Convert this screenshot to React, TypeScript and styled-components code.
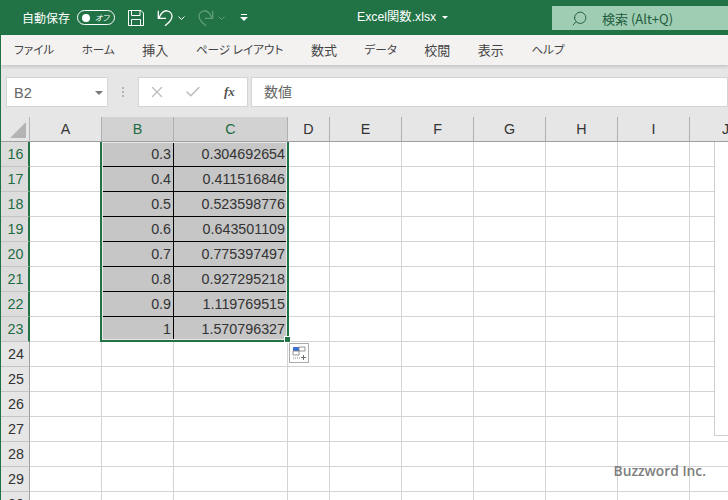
import * as React from 'react';
import styled, { createGlobalStyle } from 'styled-components';
import { Check, Search, X } from 'lucide-react';

const columns = [
  { name: 'A', width: 72 },
  { name: 'B', width: 72 },
  { name: 'C', width: 114 },
  { name: 'D', width: 42 },
  { name: 'E', width: 72 },
  { name: 'F', width: 72 },
  { name: 'G', width: 72 },
  { name: 'H', width: 72 },
  { name: 'I', width: 72 },
  { name: 'J', width: 72 }
];

const values: Record<number, [string, string]> = {
  16: ['0.3', '0.304692654'],
  17: ['0.4', '0.411516846'],
  18: ['0.5', '0.523598776'],
  19: ['0.6', '0.643501109'],
  20: ['0.7', '0.775397497'],
  21: ['0.8', '0.927295218'],
  22: ['0.9', '1.119769515'],
  23: ['1', '1.570796327']
};

const rows = Array.from({ length: 15 }, (_, i) => i + 16);
const tabs = [
  { label: 'ファイル', kana: true },
  { label: 'ホーム', kana: true },
  { label: '挿入', kana: false },
  { label: 'ページ レイアウト', kana: true },
  { label: '数式', kana: false },
  { label: 'データ', kana: true },
  { label: '校閲', kana: false },
  { label: '表示', kana: false },
  { label: 'ヘルプ', kana: true }
];

const fontStack = `'Noto Sans CJK JP', 'Liberation Sans', sans-serif`;
const numberStack = `'Liberation Sans', 'Noto Sans CJK JP', sans-serif`;

const GlobalStyle = createGlobalStyle`
  html, body {
    margin: 0;
    padding: 0;
    background: #fff;
  }
`;

const Window = styled.div`
  width: 728px;
  height: 500px;
  overflow: hidden;
  position: relative;
  box-sizing: border-box;
  border-left: 1px solid #217346;
  font-family: ${fontStack};
  font-feature-settings: 'palt';
  display: flex;
  flex-direction: column;
  background: #fff;
`;

const TitleBar = styled.div`
  height: 35px;
  flex-shrink: 0;
  background: #217346;
  color: #fff;
  display: flex;
  align-items: center;
  position: relative;
`;

const AutoSave = styled.span`
  margin-left: 21px;
  font-size: 12px;
  white-space: nowrap;
`;

const Toggle = styled.div`
  margin-left: 7px;
  width: 38px;
  height: 15px;
  flex-shrink: 0;
  box-sizing: border-box;
  border: 1px solid #fff;
  border-radius: 8px;
  display: flex;
  align-items: center;
  justify-content: space-between;
  padding: 0 5px 0 4px;
`;

const ToggleDot = styled.i`
  width: 8px;
  height: 8px;
  border-radius: 50%;
  background: #fff;
`;

const ToggleLabel = styled.span`
  font-size: 8px;
  font-style: italic;
  line-height: 1;
`;

const QuickIcon = styled.svg<{ $left: number }>`
  margin-left: ${({ $left }) => $left}px;
  flex-shrink: 0;
  display: block;
`;

const FileName = styled.div`
  position: absolute;
  left: 356px;
  top: 9px;
  font-size: 12.3px;
  line-height: 17px;
  white-space: nowrap;
  display: flex;
  align-items: center;
  font-family: ${numberStack};
`;

const Caret = styled.i<{ $color: string; $gap: number; $size: number }>`
  margin-left: ${({ $gap }) => $gap}px;
  width: 0;
  height: 0;
  border-left: ${({ $size }) => $size}px solid transparent;
  border-right: ${({ $size }) => $size}px solid transparent;
  border-top: ${({ $size }) => $size}px solid ${({ $color }) => $color};
`;

const SearchBox = styled.div`
  position: absolute;
  left: 551px;
  top: 6px;
  right: 0;
  height: 24px;
  background: #9fcdb3;
  color: #1e5c3c;
  display: flex;
  align-items: center;
  padding-left: 19px;
  font-size: 13px;
`;

const SearchLabel = styled.span`
  margin-left: 14px;
`;

const Ribbon = styled.div`
  height: 30px;
  flex-shrink: 0;
  box-sizing: border-box;
  background: #f3f2f1;
  display: flex;
  align-items: center;
  padding: 0 0 2px 13px;
  gap: 27.5px;
  color: #444;
  box-shadow: 0 2px 3px rgba(0, 0, 0, 0.14);
  position: relative;
  z-index: 1;
`;

const Tab = styled.span<{ $kana: boolean }>`
  white-space: nowrap;
  font-size: ${({ $kana }) => ($kana ? '11.6px' : '13px')};
`;

const FormulaBar = styled.div`
  height: 52px;
  flex-shrink: 0;
  background: #e6e6e6;
  box-sizing: border-box;
  padding: 12px 0 10px 5px;
  display: flex;
  align-items: stretch;
`;

const FieldBox = styled.div`
  background: #fff;
  box-sizing: border-box;
  border: 1px solid #d4d4d4;
  display: flex;
  align-items: center;
`;

const NameBox = styled(FieldBox)`
  width: 102px;
  justify-content: space-between;
  padding: 2px 4px 0 7px;
  color: #666;
  font-family: ${numberStack};
  font-size: 14.5px;
`;

const Grip = styled.div`
  width: 30px;
  display: flex;
  flex-direction: column;
  align-items: center;
  justify-content: center;
  gap: 2px;
`;

const GripDot = styled.i`
  width: 2px;
  height: 2px;
  background: #b4b4b4;
`;

const ActionBox = styled(FieldBox)`
  width: 110px;
  padding-left: 9px;
  color: #bcbcbc;
  gap: 18px;
`;

const FxLabel = styled.span`
  font-family: 'Liberation Serif', serif;
  font-style: italic;
  font-weight: 700;
  color: #555;
  font-size: 13px;
  margin-left: 4px;
`;

const InputBox = styled(FieldBox)`
  flex: 1;
  margin-left: 3px;
  padding: 0 0 3px 12px;
  color: #666;
  font-size: 14px;
`;

const Sheet = styled.div`
  flex: 1;
  display: grid;
  grid-template-columns: 29px ${columns.map((c) => `${c.width}px`).join(' ')};
  grid-auto-rows: 25px;
  position: relative;
  font-family: ${numberStack};
  font-size: 14.3px;
  color: #222;
`;

const Corner = styled.div`
  background: #e6e6e6;
  box-sizing: border-box;
  border-right: 1px solid #b5b5b5;
  border-bottom: 1px solid #9f9f9f;
  display: flex;
  align-items: flex-end;
  justify-content: flex-end;
  padding: 0 3px 3px 0;
`;

const Triangle = styled.i`
  width: 0;
  height: 0;
  border-left: 16px solid transparent;
  border-bottom: 16px solid #b4b4b4;
`;

const ColumnHead = styled.div<{ $active: boolean }>`
  box-sizing: border-box;
  background: ${({ $active }) => ($active ? '#d2d2d2' : '#e6e6e6')};
  color: ${({ $active }) => ($active ? '#1e6b43' : '#333')};
  border-right: 1px solid #b0b0b0;
  border-bottom: 1px solid #9f9f9f;
  display: flex;
  align-items: center;
  justify-content: center;
`;

const RowHead = styled.div<{ $active: boolean }>`
  box-sizing: border-box;
  background: ${({ $active }) => ($active ? '#dcdcdc' : '#e6e6e6')};
  color: ${({ $active }) => ($active ? '#1e6b43' : '#333')};
  border-right: ${({ $active }) => ($active ? '2px solid #217346' : '1px solid #9f9f9f')};
  border-bottom: 1px solid #c4c4c4;
  display: flex;
  align-items: center;
  justify-content: center;
  padding-left: 2px;
`;

const Cell = styled.div<{ $selected: boolean }>`
  box-sizing: border-box;
  background: ${({ $selected }) => ($selected ? '#c6c6c6' : '#fff')};
  border-right: 1px solid ${({ $selected }) => ($selected ? '#000' : '#d4d4d4')};
  border-bottom: 1px solid ${({ $selected }) => ($selected ? '#000' : '#d4d4d4')};
  display: flex;
  align-items: center;
  justify-content: flex-end;
  padding-right: 2px;
  color: #333;
`;

const Selection = styled.div`
  position: absolute;
  grid-column: 3 / 5;
  grid-row: 2 / 10;
  top: 0;
  left: -2px;
  right: -1px;
  bottom: 0;
  box-sizing: border-box;
  border: 2px solid #217346;
  border-top: none;
  box-shadow: inset 0 0 0 1px #e8e8e8;
  pointer-events: none;
`;

const FillHandle = styled.i`
  position: absolute;
  right: -4px;
  bottom: -3px;
  width: 5px;
  height: 5px;
  background: #217346;
  border: 1px solid #fff;
`;

const QuickAnalysis = styled.div`
  position: absolute;
  right: -22px;
  bottom: -23px;
  width: 20px;
  height: 20px;
  box-sizing: border-box;
  background: #fff;
  border: 1px solid #ababab;
  display: flex;
  align-items: center;
  justify-content: center;
`;

const ChartEdge = styled.div`
  position: absolute;
  left: 713px;
  top: 25px;
  width: 20px;
  height: 293px;
  background: #fff;
  border-left: 1px solid #d0d0d0;
  border-bottom: 1px solid #d0d0d0;
`;

const Watermark = styled.div`
  position: absolute;
  right: 22px;
  bottom: 20px;
  font-family: 'Open Sans', sans-serif;
  font-size: 13.8px;
  font-weight: 600;
  color: #7d7d7d;
  white-space: nowrap;
`;

export default function App() {
  return (
    <>
      <GlobalStyle />
      <Window>
        <TitleBar>
          <AutoSave>自動保存</AutoSave>
          <Toggle>
            <ToggleDot />
            <ToggleLabel>オフ</ToggleLabel>
          </Toggle>
          <QuickIcon $left={13} width="16" height="16" viewBox="0 0 16 16" fill="none" stroke="#fff" strokeWidth="1">
            <path d="M.5.5h12.500l2.500 2.500v12.500H.5z" />
            <path d="M3.500 .5v5h8.500v-5M3.500 15.500v-6h9v6" />
          </QuickIcon>
          <QuickIcon $left={13} width="17" height="18" viewBox="0 0 17 18" fill="none" stroke="#fff" strokeWidth="1.300">
            <path d="M1.300 1.700V9.300H9" />
            <path d="M2 9C4 4 7 1.500 10 1.800c4 .4 6 4.200 4.500 7.700-1 2.500-3.500 5-6.500 7.200" />
          </QuickIcon>
          <QuickIcon $left={4} width="7" height="4" viewBox="0 0 7 4" fill="none" stroke="#fff">
            <path d="M.5.500l3 3 3-3" />
          </QuickIcon>
          <QuickIcon $left={12} width="17" height="18" viewBox="0 0 17 18" fill="none" stroke="#5f9c7c" strokeWidth="1.300">
            <path d="M15.700 1.700V9.300H8" />
            <path d="M15 9C13 4 10 1.500 7 1.800c-4 .4-6 4.200-4.500 7.700 1 2.500 3.500 5 6.500 7.200" />
          </QuickIcon>
          <QuickIcon $left={4} width="7" height="4" viewBox="0 0 7 4" fill="none" stroke="#5f9c7c">
            <path d="M.5.500l3 3 3-3" />
          </QuickIcon>
          <QuickIcon $left={15} width="8" height="7" viewBox="0 0 8 7" fill="#fff" stroke="none">
            <path d="M1 0h6v1H1zM0 3h8L4 7z" />
          </QuickIcon>
          <FileName>
            Excel関数.xlsx
            <Caret $color="#fff" $gap={6} $size={3} />
          </FileName>
          <SearchBox>
            <Search size={17} strokeWidth={1.300} style={{ transform: 'scaleX(-1)' }} />
            <SearchLabel>検索 (Alt+Q)</SearchLabel>
          </SearchBox>
        </TitleBar>
        <Ribbon>
          {tabs.map((tab) => (
            <Tab key={tab.label} $kana={tab.kana}>
              {tab.label}
            </Tab>
          ))}
        </Ribbon>
        <FormulaBar>
          <NameBox>
            B2
            <Caret $color="#777" $gap={0} $size={4} />
          </NameBox>
          <Grip>
            <GripDot />
            <GripDot />
            <GripDot />
          </Grip>
          <ActionBox>
            <X size={18} strokeWidth={1.600} />
            <Check size={18} strokeWidth={2} />
            <FxLabel>fx</FxLabel>
          </ActionBox>
          <InputBox>数値</InputBox>
        </FormulaBar>
        <Sheet>
          <Corner>
            <Triangle />
          </Corner>
          {columns.map((c) => (
            <ColumnHead key={c.name} $active={c.name === 'B' || c.name === 'C'}>
              {c.name}
            </ColumnHead>
          ))}
          {rows.map((row) => (
            <React.Fragment key={row}>
              <RowHead $active={row <= 23}>{row}</RowHead>
              {columns.map((c) => {
                const data = values[row];
                const selected = !!data && (c.name === 'B' || c.name === 'C');
                return (
                  <Cell key={c.name} $selected={selected}>
                    {selected ? data[c.name === 'B' ? 0 : 1] : ''}
                  </Cell>
                );
              })}
            </React.Fragment>
          ))}
          <Selection>
            <FillHandle />
            <QuickAnalysis>
              <svg width="16" height="16" viewBox="0 0 16 16" fill="none">
                <path d="M2 2h6v4H2z" fill="#3f6fd8" />
                <path d="M8 2h6v4H8zM2 6h6v4H2z" stroke="#7c7c7c" strokeWidth=".8" />
                <path d="M2 13h7" stroke="#8a8a8a" strokeDasharray="1 1" />
                <path d="M12.500 10v5M10 12.500h5" stroke="#6f6f6f" />
              </svg>
            </QuickAnalysis>
          </Selection>
          <ChartEdge />
        </Sheet>
        <Watermark>Buzzword Inc.</Watermark>
      </Window>
    </>
  );
}
